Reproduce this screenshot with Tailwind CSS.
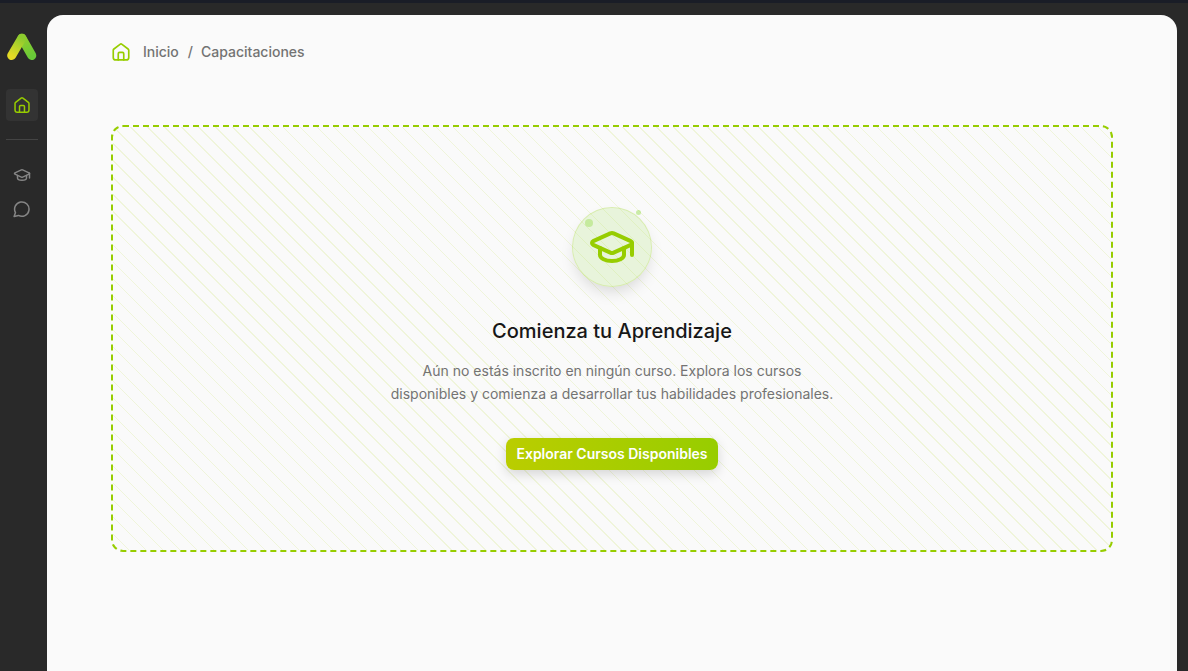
<!DOCTYPE html>
<html lang="es">
<head>
<meta charset="utf-8">
<meta name="viewport" content="width=device-width, initial-scale=1">
<title>Capacitaciones</title>
<script src="https://cdn.jsdelivr.net/npm/@tailwindcss/browser@4"></script>
</head>
<body class="flex min-h-screen border-t-3 border-[#1a1d27] bg-[#292929] font-['Inter',sans-serif]">
<aside class="flex w-[47px] shrink-0 flex-col items-center pt-7 pr-[3px]">
  <a href="#" aria-label="Inicio" class="block">
    <svg class="h-8 w-8" viewBox="0 0 32 32" fill="none" stroke-linecap="round">
      <defs>
        <linearGradient id="right-leg" gradientUnits="userSpaceOnUse" x1="15" y1="7" x2="26" y2="25"><stop stop-color="#94cd2b"/><stop offset="1" stop-color="#68c938"/></linearGradient>
        <linearGradient id="left-leg" gradientUnits="userSpaceOnUse" x1="6" y1="25" x2="16" y2="7"><stop stop-color="#e4da25"/><stop offset="1" stop-color="#8ccb2e"/></linearGradient>
      </defs>
      <path d="M16 7.200 25.800 24.500" stroke="url(#right-leg)" stroke-width="9"/>
      <path d="M5.700 24.500 15.800 7.200" stroke="url(#left-leg)" stroke-width="9"/>
    </svg>
  </a>
  <nav class="flex w-full flex-col items-center" aria-label="Principal">
    <a href="#" aria-label="Inicio" class="mt-[26px] flex h-8 w-8 items-center justify-center rounded-sm bg-[#333333] text-[#97cd00]">
      <svg class="h-[18px] w-[18px]" viewBox="0 0 24 24" fill="none" stroke="currentColor" stroke-width="2" stroke-linecap="round" stroke-linejoin="round"><path d="M2.700 10v8.500a3 3 0 0 0 3 3h12.600a3 3 0 0 0 3-3V10a2 2 0 0 0-.8-1.600L13.200 2.800a2 2 0 0 0-2.400 0L3.500 8.400A2 2 0 0 0 2.700 10Z"/><path d="M8.700 21.500V14a1.500 1.500 0 0 1 1.500-1.500h3.600a1.500 1.500 0 0 1 1.500 1.500v7.500"/></svg>
    </a>
    <hr class="mt-[18px] w-8 border-[#444444]">
    <a href="#" aria-label="Capacitaciones" class="mt-[26px] text-[#858585]">
      <svg class="h-[18px] w-[18px]" viewBox="0 0 24 24" fill="none" stroke="currentColor" stroke-width="2" stroke-linecap="round" stroke-linejoin="round"><path d="M21.420 10.922a1 1 0 0 0-.019-1.838L12.830 5.180a2 2 0 0 0-1.660 0L2.600 9.080a1 1 0 0 0 0 1.832l8.570 3.908a2 2 0 0 0 1.660 0z"/><path d="M22 10v6"/><path d="M6 12.500V16a6 3 0 0 0 12 0v-3.500"/></svg>
    </a>
    <a href="#" aria-label="Mensajes" class="mt-4 text-[#858585]">
      <svg class="h-[18px] w-[18px]" viewBox="0 0 24 24" fill="none" stroke="currentColor" stroke-width="2" stroke-linecap="round" stroke-linejoin="round"><path d="M7.200 20.600A9.600 9.600 0 1 0 3.300 16.700L1.500 22Z"/></svg>
    </a>
  </nav>
</aside>
<main class="mt-3 mr-[11px] min-w-0 flex-1 rounded-t-2xl bg-[#fafafa] px-16 pt-[27px] pb-8">
  <nav aria-label="Ruta" class="flex h-5 items-center text-sm font-medium text-[#737373]">
    <a href="#" class="flex items-center">
      <svg class="mr-3 h-5 w-5 text-[#97cd00]" viewBox="0 0 24 24" fill="none" stroke="currentColor" stroke-width="2" stroke-linecap="round" stroke-linejoin="round"><path d="M2.700 10v8.500a3 3 0 0 0 3 3h12.600a3 3 0 0 0 3-3V10a2 2 0 0 0-.8-1.600L13.200 2.800a2 2 0 0 0-2.400 0L3.500 8.400A2 2 0 0 0 2.700 10Z"/><path d="M8.700 21.500V14a1.500 1.500 0 0 1 1.500-1.500h3.600a1.500 1.500 0 0 1 1.500 1.500v7.500"/></svg>
      Inicio
    </a>
    <span class="mr-2 ml-[9px]" aria-hidden="true">/</span>
    <span aria-current="page">Capacitaciones</span>
  </nav>
  <section class="relative mt-[63px] flex flex-col items-center rounded-xl border-2 border-dashed border-[#97cd00] px-6 py-20 text-center">
    <div class="absolute inset-0 rounded-xl bg-[repeating-linear-gradient(45deg,transparent,transparent_11px,rgba(180,215,40,0.15)_11px,rgba(180,215,40,0.15)_12px)]"></div>
    <div class="relative flex h-20 w-20 items-center justify-center rounded-full border border-[#97cd00]/20 bg-[#84d62c]/15 text-[#97cd00] shadow-[0_8px_16px_-4px_rgba(0,0,0,0.15)]">
      <svg class="h-12 w-12" viewBox="0 0 24 24" fill="none" stroke="currentColor" stroke-width="2" stroke-linecap="round" stroke-linejoin="round"><path d="M21.420 10.922a1 1 0 0 0-.019-1.838L12.830 5.180a2 2 0 0 0-1.660 0L2.600 9.080a1 1 0 0 0 0 1.832l8.570 3.908a2 2 0 0 0 1.660 0z"/><path d="M22 10v6"/><path d="M6 12.500V16a6 3 0 0 0 12 0v-3.500"/></svg>
      <span class="absolute top-[11px] left-3 h-2 w-2 rounded-full bg-[#84d62c]/35"></span>
      <span class="absolute top-[2px] right-[10px] h-[5px] w-[5px] rounded-full bg-[#84d62c]/40"></span>
    </div>
    <h1 class="relative mt-8 text-xl leading-tight font-medium text-[#171717]">Comienza tu Aprendizaje</h1>
    <p class="relative mt-4 max-w-md text-sm leading-relaxed text-[#737373]">Aún no estás inscrito en ningún curso. Explora los cursos disponibles y comienza a desarrollar tus habilidades profesionales.</p>
    <button type="button" class="relative mt-8 h-8 rounded-lg bg-linear-to-r from-[#bacd00] to-[#97cd00] px-[10px] text-sm font-semibold text-white shadow-[0_4px_12px_rgba(0,0,0,0.15)]">Explorar Cursos Disponibles</button>
  </section>
</main>
</body>
</html>
